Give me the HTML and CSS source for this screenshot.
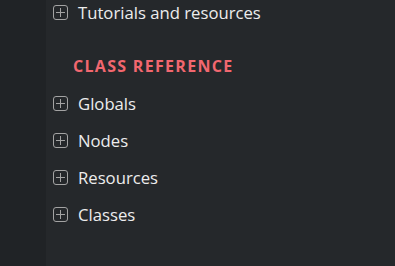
FILE: index.html
```html
<!DOCTYPE html>
<html lang="en">
<head>
    <meta charset="UTF-8">
    <title>Docs sidebar</title>
    <link rel="stylesheet" href="styles.css">
</head>
<body>
    <div class="layout">
        <div class="gutter"></div>
        <nav class="toc">
            <ul class="toc-list">
                <li class="toc-item first"><span class="toggle"></span>Tutorials and resources</li>
            </ul>

            <p class="caption">CLASS REFERENCE</p>

            <ul class="toc-list">
                <li class="toc-item"><span class="toggle"></span>Globals</li>
                <li class="toc-item"><span class="toggle"></span>Nodes</li>
                <li class="toc-item"><span class="toggle"></span>Resources</li>
                <li class="toc-item"><span class="toggle"></span>Classes</li>
            </ul>
        </nav>
    </div>
</body>
</html>
```

FILE: styles.css
```css
* {
    margin: 0;
    padding: 0;
    box-sizing: border-box;
    font-family: 'Open Sans', 'Noto Sans', sans-serif;
}

body {
    background: #25282b;
    height: 266px;
    overflow: hidden;
}

.layout {
    display: flex;
    height: 100%;
}

.gutter {
    width: 46px;
    background: #202326;
}

.toc {
    flex: 1;
    padding-left: 7px;
}

.toc-list {
    list-style: none;
}

.toc-item {
    display: flex;
    align-items: center;
    height: 37px;
    color: #ededed;
    font-size: 16.7px;
}

.toc-item.first {
    margin-top: -6.5px;
}

.toggle {
    position: relative;
    width: 15px;
    height: 15px;
    border: 1px solid #a3a3a3;
    border-radius: 3px;
    margin-right: 10px;
}

.toggle::before,
.toggle::after {
    content: '';
    position: absolute;
    background: #a3a3a3;
}

.toggle::before {
    left: 2px;
    right: 2px;
    top: 6px;
    height: 1px;
}

.toggle::after {
    top: 2px;
    bottom: 2px;
    left: 6px;
    width: 1px;
}

.caption {
    color: #f2676f;
    font-size: 16px;
    line-height: 22px;
    font-weight: bold;
    letter-spacing: 1.3px;
    padding-left: 20px;
    margin: 24.5px 0 7.5px;
}
```
